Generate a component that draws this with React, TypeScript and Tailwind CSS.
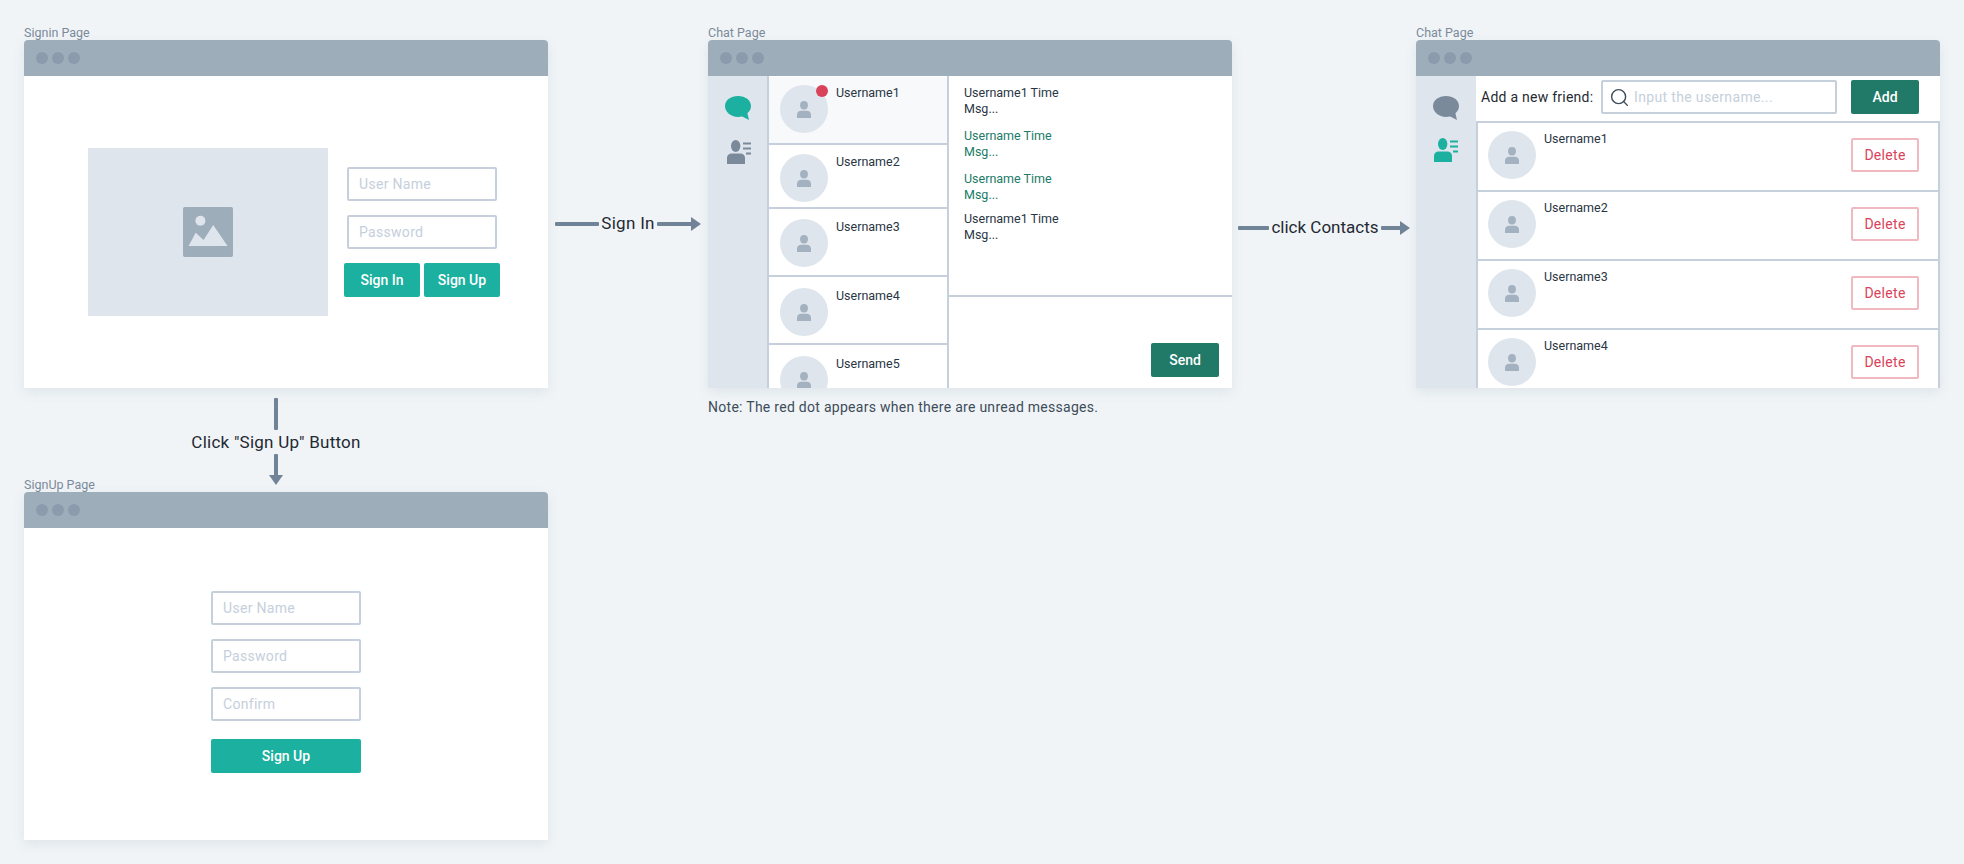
import type { ReactNode } from 'react'
import { Search } from 'lucide-react'

const chatRows = [
  { name: 'Username1', height: 'h-[68px]', pad: 'pt-[8px]', active: true },
  { name: 'Username2', height: 'h-[64px]', pad: 'pt-[9px]' },
  { name: 'Username3', height: 'h-[68px]', pad: 'pt-[10px]' },
  { name: 'Username4', height: 'h-[68px]', pad: 'pt-[11px]' },
  { name: 'Username5', height: 'h-[68px]', pad: 'pt-[11px]' },
]

const messages = [
  { title: 'Username1 Time', mine: false, gap: 'mt-0' },
  { title: 'Username Time', mine: true, gap: 'mt-[11px]' },
  { title: 'Username Time', mine: true, gap: 'mt-[11px]' },
  { title: 'Username1 Time', mine: false, gap: 'mt-[8px]' },
]

function Person() {
  return (
    <svg width="16" height="17" viewBox="0 0 16 17" fill="#a3b1c0">
      <ellipse cx="8" cy="4.2" rx="3.9" ry="4.2" />
      <path d="M1 17v-3.2C1 11 3 9.8 5.2 9.8h5.6c2.200 0 4.200 1.200 4.200 4V17z" />
    </svg>
  )
}

function Avatar({ dot }: { dot?: boolean }) {
  return (
    <div className="relative flex h-[48px] w-[48px] shrink-0 items-center justify-center rounded-full bg-[#dfe5ed]">
      <Person />
      {dot && <span className="absolute right-0 top-0 h-[12px] w-[12px] rounded-full bg-[#d9435a]" />}
    </div>
  )
}

function ChatIcon({ color }: { color: string }) {
  return (
    <svg width="26" height="24" viewBox="0 0 26 24" fill={color}>
      <path d="M13 0c7.200 0 13 4.200 13 10 0 3.200-1.500 5.600-3.600 7.200L24 24l-6.800-3.400c-1.300.2-2.800.3-4.200.3C5.800 20.900 0 16 0 10 0 4.200 5.800 0 13 0z" />
    </svg>
  )
}

function ContactsIcon({ color }: { color: string }) {
  return (
    <svg width="24" height="24" viewBox="0 0 24 24" fill={color}>
      <ellipse cx="8.700" cy="6" rx="4.700" ry="6" />
      <path d="M0 24v-6c0-3 2-4.500 4.500-4.500h9c2.500 0 4.500 1.500 4.500 4.500v6z" />
      <rect x="16" y="2.500" width="8" height="2" />
      <rect x="16" y="7.500" width="8" height="2" />
      <rect x="19" y="12.500" width="5" height="2" />
    </svg>
  )
}

function Sidebar({ width, chatColor, contactColor, contactGap }: { width: string; chatColor: string; contactColor: string; contactGap: string }) {
  return (
    <div className={`flex shrink-0 flex-col items-center bg-[#dfe5ed] pt-[20px] ${width}`}>
      <ChatIcon color={chatColor} />
      <div className={contactGap}>
        <ContactsIcon color={contactColor} />
      </div>
    </div>
  )
}

function Field({ placeholder, className = '' }: { placeholder: string; className?: string }) {
  return (
    <input
      readOnly
      placeholder={placeholder}
      className={`h-[34px] w-[150px] rounded-[2px] border-2 border-[#c5d0dc] bg-white pl-[10px] text-[14px] tracking-[0.3px] outline-none placeholder:text-[#c5d0dc] ${className}`}
    />
  )
}

function BrowserWindow({ title, left, top, children }: { title: string; left: string; top: string; children: ReactNode }) {
  return (
    <section className={`absolute w-[524px] ${left} ${top}`}>
      <div className="h-[15px] text-[12.5px] leading-[15px] text-[#7b8a9a]">{title}</div>
      <div className="flex h-[348px] flex-col overflow-hidden rounded-t-[4px] bg-white shadow-[0_4px_12px_rgba(100,120,140,0.12)]">
        <div className="flex h-[36px] shrink-0 items-center gap-[4px] bg-[#9eadba] pl-[12px]">
          <span className="h-[12px] w-[12px] rounded-full bg-[#8b9bac]" />
          <span className="h-[12px] w-[12px] rounded-full bg-[#8b9bac]" />
          <span className="h-[12px] w-[12px] rounded-full bg-[#8b9bac]" />
        </div>
        <div className="flex min-h-0 flex-1">{children}</div>
      </div>
    </section>
  )
}

function ArrowRight({ width }: { width: number }) {
  return (
    <svg width={width} height="14" viewBox={`0 0 ${width} 14`} fill="#718396" className="shrink-0">
      <rect x="0" y="5" width={width - 8} height="4" rx="1" />
      <path d={`M${width - 10} 0l10 7-10 7z`} />
    </svg>
  )
}

function ImagePlaceholder() {
  return (
    <svg width="50" height="50" viewBox="0 0 50 50">
      <rect width="50" height="50" rx="2" fill="#9eadba" />
      <circle cx="17.400" cy="13.700" r="5" fill="#dfe5ed" />
      <path d="M5.600 39 12.700 25.700 20.600 33 30.200 18 44.500 39z" fill="#dfe5ed" />
    </svg>
  )
}

function SigninBody() {
  return (
    <div className="flex pl-[64px] pt-[72px]">
      <div className="flex h-[168px] w-[240px] items-center justify-center bg-[#dfe5ed]">
        <ImagePlaceholder />
      </div>
      <div className="ml-[16px] flex w-[156px] flex-col pt-[19px]">
        <Field placeholder="User Name" className="mx-[3px]" />
        <Field placeholder="Password" className="mx-[3px] mt-[14px]" />
        <div className="mt-[14px] flex gap-[4px]">
          <button className="h-[34px] w-[76px] rounded-[2px] bg-[#1bb09f] text-[14px] font-medium text-white">Sign In</button>
          <button className="h-[34px] w-[76px] rounded-[2px] bg-[#1bb09f] text-[14px] font-medium text-white">Sign Up</button>
        </div>
      </div>
    </div>
  )
}

function SignupBody() {
  return (
    <div className="flex flex-col pl-[187px] pt-[63px]">
      <Field placeholder="User Name" />
      <Field placeholder="Password" className="mt-[14px]" />
      <Field placeholder="Confirm" className="mt-[14px]" />
      <button className="mt-[18px] h-[34px] w-[150px] rounded-[2px] bg-[#1bb09f] text-[14px] font-medium text-white">Sign Up</button>
    </div>
  )
}

function ChatBody() {
  return (
    <>
      <Sidebar width="w-[59px]" chatColor="#1bb09f" contactColor="#7b8a9a" contactGap="mt-[20px] ml-[3px]" />
      <div className="w-[182px] shrink-0 border-x-2 border-[#c5d0dc] pt-px">
        {chatRows.map((row) => (
          <div
            key={row.name}
            className={`flex border-b-2 border-[#c5d0dc] pl-[11px] ${row.height} ${row.pad} ${row.active ? 'bg-[#f7f9fb]' : 'bg-white'}`}
          >
            <Avatar dot={row.active} />
            <span className="ml-[8px] text-[12.5px] leading-[16px] text-[#2a3644]">{row.name}</span>
          </div>
        ))}
      </div>
      <div className="flex min-w-0 flex-1 flex-col">
        <div className="h-[219px] shrink-0 pl-[15px] pt-[9px] text-[12.5px] leading-[16px]">
          {messages.map((m, i) => (
            <div key={i} className={`${m.gap} ${m.mine ? 'text-[#217a68]' : 'text-[#2a3644]'}`}>
              <div>{m.title}</div>
              <div>Msg...</div>
            </div>
          ))}
        </div>
        <div className="flex flex-1 justify-end border-t-2 border-[#c5d0dc] pr-[13px] pt-[46px]">
          <button className="h-[34px] w-[68px] rounded-[2px] bg-[#217a68] text-[14px] font-medium text-white">Send</button>
        </div>
      </div>
    </>
  )
}

function ContactsBody() {
  return (
    <>
      <Sidebar width="w-[60px]" chatColor="#7b8a9a" contactColor="#1bb09f" contactGap="mt-[18px]" />
      <div className="flex min-w-0 flex-1 flex-col">
        <div className="flex h-[45px] shrink-0 items-start pl-[5px] pt-[4px]">
          <span className="mt-[8px] w-[120px] whitespace-nowrap text-[14px] leading-[18px] tracking-[0.25px] text-[#1f2933]">Add a new friend:</span>
          <div className="flex h-[34px] w-[236px] items-center rounded-[2px] border-2 border-[#c5d0dc] pl-[6px]">
            <Search size={21} color="#3e4c59" strokeWidth={1.6} className="shrink-0" />
            <span className="ml-[4px] text-[14px] tracking-[0.35px] text-[#c5d0dc]">Input the username...</span>
          </div>
          <button className="ml-[14px] h-[34px] w-[68px] rounded-[2px] bg-[#217a68] text-[14px] font-medium text-white">Add</button>
        </div>
        {['Username1', 'Username2', 'Username3', 'Username4'].map((name) => (
          <div key={name} className="box-content flex h-[66px] shrink-0 items-start border-2 border-b-0 border-[#c5d0dc] pl-[10px] pt-[1px] last:border-b-0">
            <div className="mt-[7px]">
              <Avatar />
            </div>
            <span className="ml-[8px] mt-[7px] flex-1 text-[12.5px] leading-[16px] text-[#2a3644]">{name}</span>
            <button className="mr-[19px] mt-[14px] h-[34px] w-[68px] rounded-[2px] border-2 border-[#f0b8c1] text-[14px] tracking-[0.3px] text-[#d9435a]">Delete</button>
          </div>
        ))}
      </div>
    </>
  )
}

export default function App() {
  return (
    <div className="relative h-[864px] w-[1964px] overflow-hidden bg-[#f0f4f7] font-['Roboto',sans-serif]">
      <BrowserWindow title="Signin Page" left="left-[24px]" top="top-[25px]">
        <SigninBody />
      </BrowserWindow>
      <BrowserWindow title="Chat Page" left="left-[708px]" top="top-[25px]">
        <ChatBody />
      </BrowserWindow>
      <BrowserWindow title="Chat Page" left="left-[1416px]" top="top-[25px]">
        <ContactsBody />
      </BrowserWindow>
      <BrowserWindow title="SignUp Page" left="left-[24px]" top="top-[477px]">
        <SignupBody />
      </BrowserWindow>

      <div className="absolute left-[555px] top-[213px] flex h-[22px] items-center gap-[2px] text-[17px] tracking-[0.3px] text-[#1f2933]">
        <svg width="44" height="4" className="shrink-0">
          <rect width="44" height="4" rx="1" fill="#718396" />
        </svg>
        <span className="w-[54px] whitespace-nowrap text-center">Sign In</span>
        <ArrowRight width={44} />
      </div>

      <div className="absolute left-[1238px] top-[217px] flex h-[22px] items-center gap-[2px] text-[17px] text-[#1f2933]">
        <svg width="31" height="4" className="shrink-0">
          <rect width="31" height="4" rx="1" fill="#718396" />
        </svg>
        <span className="w-[108px] whitespace-nowrap text-center">click Contacts</span>
        <ArrowRight width={29} />
      </div>

      <div className="absolute left-[192px] top-[398px] flex w-[168px] flex-col items-center text-[17px] tracking-[0.25px] text-[#1f2933]">
        <svg width="4" height="32" className="shrink-0">
          <rect width="4" height="32" rx="1" fill="#718396" />
        </svg>
        <span className="h-[24px] whitespace-nowrap leading-[24px]">Click "Sign Up" Button</span>
        <svg width="14" height="31" viewBox="0 0 14 31" fill="#718396" className="shrink-0">
          <rect x="5" y="0" width="4" height="24" rx="1" />
          <path d="M0 21h14l-7 10z" />
        </svg>
      </div>

      <p className="absolute left-[708px] top-[398px] text-[14px] leading-[18px] tracking-[0.28px] text-[#3e4c59]">
        Note: The red dot appears when there are unread messages.
      </p>
    </div>
  )
}
